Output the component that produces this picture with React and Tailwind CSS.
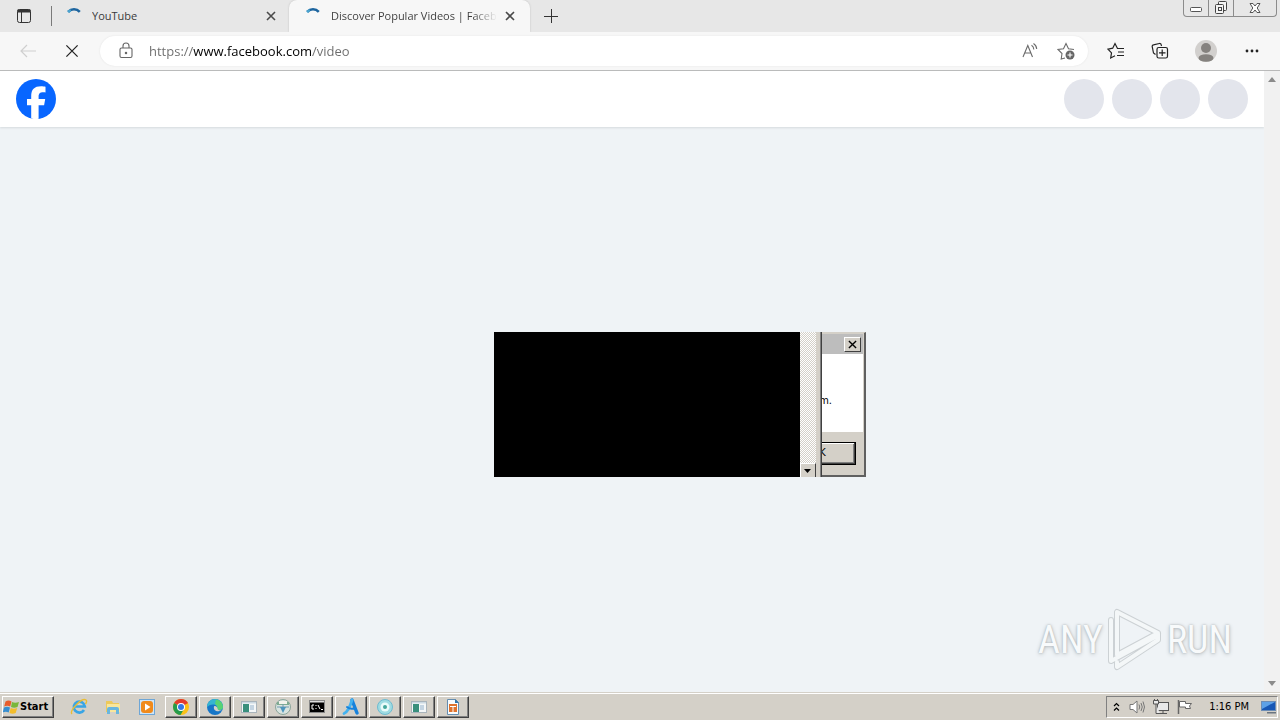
import React, { useState } from 'react';

function IconButton({ label, className = '', children }) {
    return (
        <button type="button" aria-label={label} className={`flex shrink-0 items-center justify-center ${className}`}>
            {children}
        </button>
    );
}

function Spinner() {
    return (
        <svg width="16" height="16" viewBox="0 0 16 16" className="shrink-0" fill="none">
            <path d="M2.2 3.800A8 8 0 0 1 13.800 3.800" stroke="#1d659f" strokeWidth="2.600" />
            <path d="M2 4A8 8 0 0 1 4.800 2.200" stroke="#4aa3cf" strokeWidth="2.600" />
        </svg>
    );
}

function CloseIcon({ size = 10, width = 1.6, color = '#4a4a4a' }) {
    return (
        <svg width={size} height={size} viewBox="0 0 10 10" stroke={color} strokeWidth={width} fill="none">
            <path d="M1 1l8 8M9 1L1 9" />
        </svg>
    );
}

function WindowControls() {
    return (
        <div className="flex h-[17px] w-[94px] shrink-0 self-start mr-[3px] rounded-b-[4px] border border-t-0 border-[#8c8c8c] text-[#555]">
            <IconButton label="Minimize" className="w-[25px] border-r border-[#8c8c8c]">
                <svg width="14" height="14" viewBox="0 0 14 14" fill="#fff" stroke="#555">
                    <rect x="1.500" y="6.500" width="11" height="4" rx="1" />
                </svg>
            </IconButton>
            <IconButton label="Restore" className="w-[25px] border-r border-[#8c8c8c]">
                <svg width="14" height="14" viewBox="0 0 14 14" fill="#f4f4f4" stroke="#444">
                    <rect x="4.500" y="0.500" width="8" height="9" rx="1" />
                    <rect x="1.500" y="3.500" width="8" height="9" rx="1" />
                    <rect x="4.500" y="6.500" width="3" height="3" />
                </svg>
            </IconButton>
            <IconButton label="Close" className="flex-1">
                <svg width="14" height="14" viewBox="0 0 14 14" fill="#fff" stroke="#555">
                    <path d="M2 2.500h3L7 5l2-2.500h3L9.200 7l2.800 4.500H9L7 9l-2 2.500H2L4.800 7z" />
                </svg>
            </IconButton>
        </div>
    );
}

function TabStrip() {
    return (
        <div className="flex h-8 shrink-0 items-center bg-[#e7e7e7] text-[11px] leading-4 text-[#3b3b3b]">
            <IconButton label="Tab actions menu" className="w-12">
                <svg width="16" height="16" viewBox="0 0 16 16" fill="none" stroke="#333">
                    <rect x="1.500" y="1.500" width="13" height="13" rx="2" />
                    <path d="M1.500 3h13" strokeWidth="3" />
                    <path d="M5.500 4v10" />
                </svg>
            </IconButton>
            <div className="ml-[3px] h-5 w-px bg-[#7a7a7a]" />
            <div className="flex h-full w-[237px] items-center pl-[14px] pr-[10px]">
                <Spinner />
                <span className="ml-[10px] flex-1 truncate">YouTube</span>
                <IconButton label="Close tab" className="size-4">
                    <CloseIcon />
                </IconButton>
            </div>
            <div className="flex h-full w-[241px] items-center rounded-t-lg bg-[#f7f7f7] pl-4 pr-[12px] shadow-[0_0_2px_#bbb]">
                <Spinner />
                <span className="ml-[10px] flex-1 whitespace-nowrap bg-linear-to-r from-[#3b3b3b] from-85% to-transparent bg-clip-text text-transparent">
                    Discover Popular Videos | Faceb
                </span>
                <IconButton label="Close tab" className="ml-[5px] size-4">
                    <CloseIcon />
                </IconButton>
            </div>
            <IconButton label="New tab" className="ml-[13px] size-4">
                <svg width="14" height="14" viewBox="0 0 14 14" stroke="#333">
                    <path d="M7.500 0v14M0 7.500h14" />
                </svg>
            </IconButton>
            <div className="flex-1" />
            <WindowControls />
        </div>
    );
}

function Toolbar() {
    const [url, setUrl] = useState('https://www.facebook.com/video');

    return (
        <div className="relative flex h-[39px] shrink-0 items-center border-b border-[#b9b9b9] bg-[#f7f7f7] pl-3 pr-4">
            <IconButton label="Back" className="size-8">
                <svg width="16" height="14" viewBox="0 0 16 14" fill="none" stroke="#cfcfcf" strokeWidth="1.200">
                    <path d="M16 7H1M7 1L1 7l6 6" />
                </svg>
            </IconButton>
            <IconButton label="Stop" className="ml-3 size-8">
                <CloseIcon size={14} width={0.9} color="#222" />
            </IconButton>
            <div className="ml-3 flex h-[30px] flex-1 items-center rounded-full bg-white pl-[18px] pr-3 shadow-[0_0_2px_#e2e2e2]">
                <svg width="16" height="18" viewBox="0 0 16 18" fill="none" stroke="#666" strokeWidth="1.100">
                    <rect x="2" y="6" width="12" height="9.500" rx="1.500" />
                    <path d="M5 6V4a3 3 0 0 1 6 0v2" />
                    <circle cx="8" cy="11" r="0.700" fill="#666" />
                </svg>
                <input
                    aria-label="Address"
                    value={url}
                    onChange={(e) => setUrl(e.target.value)}
                    className="ml-[15px] h-5 flex-1 bg-[linear-gradient(90deg,#6b6b6b_44px,#000_44px,#000_163px,#6b6b6b_163px)] bg-clip-text text-[13px] leading-5 text-transparent outline-none"
                />
                <IconButton label="Read aloud" className="size-5">
                    <svg width="18" height="18" viewBox="0 0 18 18" fill="none" stroke="#6b6b6b" strokeWidth="1.100">
                        <path d="M2 15L6.800 3.500 11.500 15M3.600 11h6.300M10.500 3.200a5 5 0 0 1 2.300 4.200M12.500 1.500a7 7 0 0 1 3.200 5.500" />
                    </svg>
                </IconButton>
                <IconButton label="Add to favorites" className="ml-4 size-5">
                    <svg width="18" height="18" viewBox="0 0 18 18" fill="none" stroke="#6b6b6b" strokeWidth="1.100">
                        <path d="M8 16l-3.800 1 .8-5.500L1 7.500l5.500-.8L9 1.500l2.500 5.200 5.500.8" />
                        <circle cx="13" cy="13" r="4.500" fill="#666" stroke="none" />
                        <path d="M13 10.500v5M10.500 13h5" stroke="#fff" />
                    </svg>
                </IconButton>
            </div>
            <IconButton label="Favorites" className="ml-4 size-6">
                <svg width="18" height="18" viewBox="0 0 18 18" fill="none" stroke="#222" strokeWidth="1.200">
                    <path d="M10.500 6.500L8 1.500 5.700 6.200 1 7.200l3.500 3.700L3.700 16 8 13.800M10 6.500h7M11 10h6M10 13.500h7" />
                </svg>
            </IconButton>
            <IconButton label="Collections" className="ml-5 size-6">
                <svg width="18" height="18" viewBox="0 0 18 18" fill="none" stroke="#222" strokeWidth="1.200">
                    <path d="M4.500 12.500L2.500 11 1.200 4.700a1.500 1.500 0 0 1 1.200-1.800l6-1.400a1.500 1.500 0 0 1 1.800 1.200L10.500 4" />
                    <rect x="6" y="5.500" width="10.500" height="10.500" rx="1.800" />
                    <path d="M11.200 7.500v6.500M8 10.800h6.500" />
                </svg>
            </IconButton>
            <IconButton label="Profile" className="ml-[22px] size-6">
                <svg width="22" height="22" viewBox="0 0 22 22">
                    <circle cx="11" cy="11" r="11" fill="#d2d0ce" />
                    <circle cx="11" cy="8" r="5" fill="#85827f" />
                    <ellipse cx="11" cy="18" rx="7.500" ry="3.800" fill="#85827f" />
                </svg>
            </IconButton>
            <IconButton label="Settings and more" className="ml-[22px] size-6">
                <svg width="14" height="4" viewBox="0 0 14 4" fill="#222">
                    <circle cx="2" cy="2" r="1.400" />
                    <circle cx="7" cy="2" r="1.400" />
                    <circle cx="12" cy="2" r="1.400" />
                </svg>
            </IconButton>
        </div>
    );
}

function FacebookHeader() {
    return (
        <header className="flex h-14 shrink-0 items-center justify-between bg-white px-4 shadow-[0_1px_2px_#d5dadd]">
            <a href="#home" aria-label="Facebook">
                <svg width="40" height="40" viewBox="0 0 40 40">
                    <circle cx="20" cy="20" r="20" fill="#0866ff" />
                    <path
                        d="M15.200 39.400V26.200H11V20h4.200v-2.700c0-6.900 3.100-10.100 9.900-10.100 1.300 0 3.500.25 4.400.5v5.700c-.5-.05-1.300-.08-2.300-.08-3.300 0-4.600 1.250-4.600 4.500V20h6.600l-1.100 6.200h-5.500v13.600a20 20 0 0 1-7.400-.4z"
                        fill="#fff"
                    />
                </svg>
            </a>
            <div className="flex gap-2">
                {[0, 1, 2, 3].map((n) => (
                    <div key={n} className="size-10 rounded-full bg-[#e3e5ec]" />
                ))}
            </div>
        </header>
    );
}

function Scrollbar() {
    return (
        <div className="flex w-4 shrink-0 flex-col items-center justify-between bg-[#f1f1f1] py-[6px]">
            <svg width="8" height="5" viewBox="0 0 8 5" fill="#8b8b8b"><path d="M0 5h8L4 0z" /></svg>
            <svg width="8" height="5" viewBox="0 0 8 5" fill="#8b8b8b"><path d="M0 0h8L4 5z" /></svg>
        </div>
    );
}

function ConsoleWindow() {
    return (
        <div className="absolute left-0 top-0 z-10 flex h-[145px] w-[328px] bg-black">
            <div className="flex-1 bg-black" />
            <div className="flex w-4 flex-col justify-end bg-[repeating-conic-gradient(#d4d0c8_0_25%,#fff_0_50%)] bg-size-[2px_2px]">
                <IconButton label="Scroll down" className="h-[14px] w-4 border border-b-0 border-white border-r-[#404040] bg-[#d4d0c8]">
                    <svg width="8" height="4" viewBox="0 0 8 4"><path d="M0 0h7L3.500 4z" /></svg>
                </IconButton>
            </div>
            <div className="w-1 bg-[#d4d0c8]" />
            <div className="w-px bg-[#808080]" />
            <div className="w-px bg-[#404040]" />
        </div>
    );
}

function MessageBox() {
    return (
        <div className="absolute left-[272px] top-0 flex h-[145px] w-[100px] flex-col border-b-2 border-r-2 border-t border-[#606060] border-t-[#d4d0c8] bg-[#d4d0c8] pr-px font-['DejaVu_Sans_Condensed','Open_Sans',sans-serif] text-[11px] text-black">
            <div className="mt-px flex h-5 items-center justify-end bg-[#bdbdbd] pr-[2px]">
                <IconButton label="Close message" className="h-[15px] w-[17px] border border-white border-b-[#404040] border-r-[#404040] bg-[#d4d0c8]">
                    <CloseIcon size={9} width={1.5} color="#000" />
                </IconButton>
            </div>
            <div className="flex h-[78px] items-center justify-end bg-white pr-[31px] pt-4">m.</div>
            <div className="flex flex-1 items-center justify-end pr-[7px]">
                <button type="button" className="h-[23px] w-[75px] border border-black bg-[#d4d0c8] shadow-[inset_-1px_-1px_#404040,inset_1px_1px_#fff,inset_-2px_-2px_#808080]">
                    OK
                </button>
            </div>
        </div>
    );
}

function Watermark() {
    return (
        <div className="absolute bottom-5 right-12 flex items-center font-['Liberation_Sans_Narrow','Roboto_Condensed',sans-serif] text-[38px] leading-none text-[#f8fafb] [text-shadow:0_0_2px_#a9afb3,0_1px_4px_#b9bfc3]">
            <span>ANY</span>
            <svg width="64" height="64" viewBox="-1 0 64 64" fill="none" strokeLinejoin="round" strokeLinecap="round">
                <g stroke="#ccd1d4" strokeWidth="6">
                    <path d="M13 4v43l41-22zM7 12v41l46-25M54 26v6L13 59v-5" />
                </g>
                <g stroke="#f4f7f8" strokeWidth="4">
                    <path d="M13 4v43l41-22zM7 12v41l46-25M54 26v6L13 59v-5" />
                </g>
            </svg>
            <span>RUN</span>
        </div>
    );
}

const taskIcons = {
    ie: (
        <svg width="18" height="18" viewBox="0 0 18 18" fill="none">
            <path d="M14 12a5.500 5.500 0 1 1 .8-3.500H5" stroke="#39a5e5" strokeWidth="2.700" />
            <path d="M2 16C-1 13 12-1 16 2c1 .8.500 2.500-.5 4" stroke="#e9bd35" strokeWidth="1.400" />
        </svg>
    ),
    folder: (
        <svg width="18" height="18" viewBox="0 0 18 18">
            <path d="M2 3h6l1 2h6v9H2z" fill="#edc95b" />
            <path d="M3 6h13v8H3z" fill="#f9e69b" />
            <path d="M3 16v-5q0-2 2-2h8q2 0 2 2v5h-3v-4H6v4z" fill="#69b6de" />
        </svg>
    ),
    media: (
        <svg width="18" height="18" viewBox="0 0 18 18">
            <rect x="1.500" y="1.500" width="15" height="15" fill="#cfe5f7" stroke="#6ea6d6" />
            <rect x="3" y="3" width="12" height="12" rx="3" fill="#f08a1b" />
            <path d="M7 5.500v7L12.500 9z" fill="#fff" />
        </svg>
    ),
    chrome: (
        <svg width="18" height="18" viewBox="0 0 18 18">
            <circle cx="9" cy="9" r="8" fill="#fbc116" />
            <path d="M9 9L2.100 5A8 8 0 0 1 16 5z" fill="#e33b2e" />
            <path d="M9 9L2.100 5A8 8 0 0 0 8.500 17L12 11z" fill="#269b4b" />
            <circle cx="9" cy="9" r="4" fill="#fff" />
            <circle cx="9" cy="9" r="3" fill="#3478e5" />
        </svg>
    ),
    edge: (
        <svg width="18" height="18" viewBox="0 0 18 18">
            <circle cx="9" cy="9" r="8" fill="#1676c8" />
            <path d="M1 9a8 8 0 0 1 16 0c0 3-4 4-6 2 2-4-5-7-10-2z" fill="#35b5d0" />
            <path d="M10 1.500a8 7.500 0 0 1 7 7.500c0 3-4 4-6 2 1-2 0-4-2-5z" fill="#58d273" />
            <path d="M8 8.500c-1 4 3 6 8 4-2-.2-4 0-4.500-2C11.300 8.500 9 7.500 8 8.500z" fill="#d4d0c8" />
        </svg>
    ),
    app: (
        <svg width="18" height="18" viewBox="0 0 18 18">
            <rect x="1.500" y="3.500" width="15" height="11" fill="#f4f7f8" stroke="#a9b4bb" />
            <path d="M2 4h14v1.500H2z" fill="#cbd9e3" />
            <path d="M3 6h6v8H3z" fill="#398f7c" />
            <path d="M10 7h4v5h-4z" fill="#c3d4e2" />
        </svg>
    ),
    globe: (
        <svg width="18" height="18" viewBox="0 0 18 18">
            <circle cx="9" cy="9" r="7.500" fill="#d9e4e0" stroke="#8aa59a" />
            <path d="M3 4h12v3H3z" fill="#7fab91" />
            <path d="M9 5v8M3 9h12" stroke="#719bb0" />
            <path d="M6 9l3 6 3-6z" fill="#4e95bd" />
            <path d="M5 3h8v3H5z" fill="#f3f3ed" />
        </svg>
    ),
    cmd: (
        <svg width="16" height="14" viewBox="0 0 16 14">
            <rect x="0.500" y="0.500" width="15" height="12" fill="#000" stroke="#888" />
            <path d="M1 1h14v1.500H1z" fill="#ddd" />
            <path d="M5 5H3v4h2M7 5v1M7 8v1M9 5l2 4M12 9.500h2" stroke="#fff" fill="none" />
        </svg>
    ),
    letterA: (
        <svg width="18" height="18" viewBox="0 0 18 18" fill="none" strokeLinecap="round">
            <path d="M10 2L15 15" stroke="#1782dc" strokeWidth="3.400" />
            <path d="M10 2C8 9 6 14 2 15.500" stroke="#43b2ef" strokeWidth="2.800" />
            <path d="M5 9q4 3 8 1" stroke="#1782dc" strokeWidth="2" />
        </svg>
    ),
    disc: (
        <svg width="18" height="18" viewBox="0 0 18 18">
            <circle cx="9" cy="9" r="7.500" fill="#9edbe2" stroke="#6ebbd0" />
            <circle cx="9" cy="9" r="4.500" fill="#e9fbfa" />
            <circle cx="9" cy="9" r="2" fill="#43a69b" />
        </svg>
    ),
    doc: (
        <svg width="16" height="18" viewBox="0 0 16 18">
            <path d="M2.500 1.500h8l3 3v12h-11z" fill="#f8fbfd" stroke="#648cae" />
            <path d="M10 1v4h4z" fill="#3677aa" />
            <path d="M4 6h8v8H4z" fill="#df722d" />
            <path d="M5 8.500h6M8 8.500V14" stroke="#fff" />
        </svg>
    ),
};

const pinned = [
    ['ie', 'Internet Explorer'],
    ['folder', 'Explorer'],
    ['media', 'Media Player'],
];

const running = [
    ['chrome', 'Chrome'],
    ['edge', 'Edge'],
    ['app', 'Application'],
    ['globe', 'Network'],
    ['cmd', 'Command Prompt'],
    ['letterA', 'Editor'],
    ['disc', 'Disc'],
    ['app', 'Application 2'],
    ['doc', 'Document'],
];

function Taskbar() {
    return (
        <footer className="flex h-7 shrink-0 items-center border-t border-[#d4d0c8] bg-[#d4d0c8] px-[2px] font-['DejaVu_Sans_Condensed','Open_Sans',sans-serif] text-[11px] leading-4 text-black shadow-[inset_0_1px_#fff]">
            <button type="button" className="flex h-[22px] w-[52px] items-center gap-px border border-white border-b-[#404040] border-r-[#404040] font-bold shadow-[inset_-1px_-1px_#808080]">
                <svg width="16" height="16" viewBox="0 0 16 16" className="shrink-0">
                    <path d="M2.500 2.500q3-2 6 0L7.200 7.500q-3-1.500-6 0z" fill="#e95d2c" />
                    <path d="M9 3q3 1.500 7 0L14.500 8q-3.500 1.500-6.500 0z" fill="#79b73b" />
                    <path d="M1 8.500q3-1.500 6 0L5.700 13.500q-3-1.500-6 0z" fill="#378ed0" />
                    <path d="M7.700 9q3 1.500 6.500 0l-1.500 5q-3.200 1.500-6.200 0z" fill="#f3bd2b" />
                </svg>
                Start
            </button>
            <div className="ml-2 flex">
                {pinned.map(([icon, label]) => (
                    <IconButton key={label} label={label} className="h-[22px] w-[34px]">
                        {taskIcons[icon]}
                    </IconButton>
                ))}
            </div>
            <div className="ml-px flex gap-[2px]">
                {running.map(([icon, label]) => (
                    <IconButton
                        key={label}
                        label={label}
                        className="h-[22px] w-8 border border-white border-b-[#404040] border-r-[#404040] shadow-[inset_-1px_-1px_#808080]"
                    >
                        {taskIcons[icon]}
                    </IconButton>
                ))}
            </div>
            <div className="ml-auto flex h-[22px] items-center border border-[#808080] border-b-white border-r-white pl-1">
                <IconButton label="Show hidden icons" className="size-[10px]">
                    <svg width="7" height="10" viewBox="0 0 7 10" fill="none" stroke="#000" strokeWidth="1.200">
                        <path d="M1 4l2.500-2.500L6 4M1 8.500L3.500 6 6 8.500" />
                    </svg>
                </IconButton>
                <IconButton label="Volume" className="ml-2 size-4">
                    <svg width="16" height="16" viewBox="0 0 16 16" fill="#fff" stroke="#777">
                        <path d="M1 5.500h3L8 2v12l-4-3.500H1z" />
                        <path d="M10 5.500q1.500 2.500 0 5M12 4q2.500 4 0 8M14 2.500q3 5.500 0 11" fill="none" />
                    </svg>
                </IconButton>
                <IconButton label="Network status" className="ml-2 size-4">
                    <svg width="16" height="16" viewBox="0 0 16 16" fill="#e9e9e9" stroke="#555">
                        <rect x="4.500" y="3.500" width="11" height="8" />
                        <path d="M10 11.500v3M6 14.500h8" />
                        <path d="M0.500 1.500h5v3.500h-5zM3 5v9.500h4M1.500 0v2M4.500 0v2" />
                    </svg>
                </IconButton>
                <IconButton label="Action center" className="ml-2 size-4">
                    <svg width="16" height="16" viewBox="0 0 16 16" fill="#fff" stroke="#666">
                        <path d="M1.500 1v14" strokeWidth="1.500" />
                        <path d="M2.500 2.500h6v2h6l-2 2.500 1 2.500h-5v-1.500h-6z" />
                    </svg>
                </IconButton>
                <span className="ml-4 whitespace-nowrap">1:16 PM</span>
                <IconButton label="Show desktop" className="ml-3 size-4">
                    <svg width="16" height="14" viewBox="0 0 16 14">
                        <rect x="0.500" y="1.500" width="14" height="9" fill="#1757b5" stroke="#6d8db5" />
                        <path d="M1 2h13L1 9z" fill="#5da1e7" />
                        <path d="M6 12h9v1.500H6z" fill="#6b7580" />
                    </svg>
                </IconButton>
            </div>
        </footer>
    );
}

export default function App() {
    return (
        <div className="flex h-screen flex-col overflow-hidden font-['Open_Sans','Noto_Sans',sans-serif]">
            <TabStrip />
            <Toolbar />
            <main className="relative flex min-h-0 flex-1 bg-[#eff3f6]">
                <div className="flex flex-1 flex-col">
                    <FacebookHeader />
                </div>
                <Scrollbar />
                {/* Desktop windows floating over the page */}
                <div className="absolute left-[494px] top-[261px]">
                    <MessageBox />
                    <ConsoleWindow />
                </div>
                <Watermark />
            </main>
            <Taskbar />
        </div>
    );
}
